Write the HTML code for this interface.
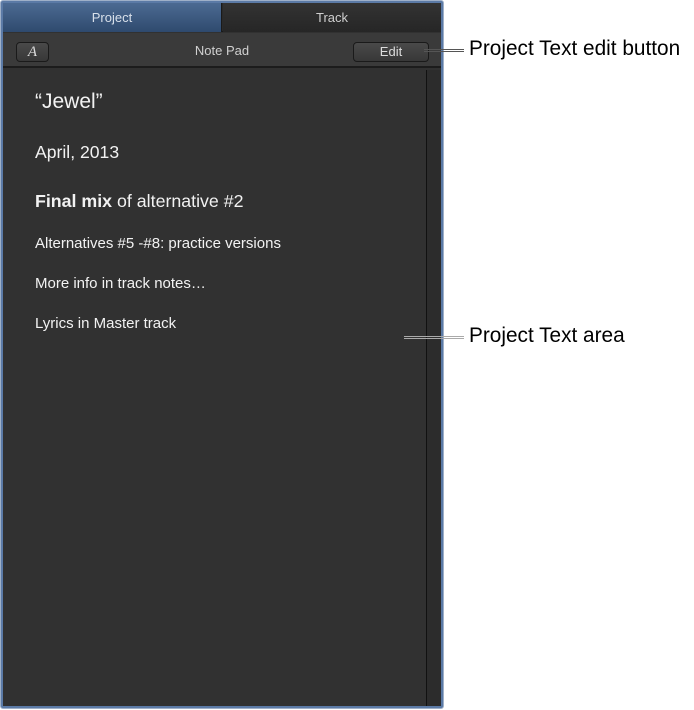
<!DOCTYPE html>
<html><head><style>
*{margin:0;padding:0;box-sizing:border-box}
body{width:694px;height:710px;background:#fff;font-family:"Liberation Sans",Arial,sans-serif;position:relative;overflow:hidden}
.panel{position:absolute;left:0;top:0;width:444px;height:709px;background:#5b7aa6;border:1px solid #9fb0c8;border-radius:3px}
.in{position:absolute;left:2px;top:2px;right:2px;bottom:2px;background:#313131}
.tabs{position:absolute;left:0;top:0;right:0;height:29px;background:#2a2a2a;border-bottom:1px solid #1a1a1a}
.tab{position:absolute;top:0;height:29px;line-height:29px;text-align:center;font-size:13px;color:#cfcfcf}
.t1{left:0;width:219px;background:linear-gradient(#4c6a92,#2f4a6e);color:#d8e0ea;border-right:1px solid #1a1a1a}
.t2{left:220px;right:0;background:linear-gradient(#333,#262626)}
.bar{position:absolute;left:0;right:0;top:30px;height:35px;background:#3a3a3a;border-bottom:2px solid #1c1c1c}
.btn{position:absolute;border:1px solid #1a1a1a;border-radius:4px;background:linear-gradient(#4a4a4a,#383838);color:#ddd;text-align:center;font-size:13px}
.np{position:absolute;left:0;right:0;top:0;line-height:35px;text-align:center;font-size:13px;color:#d0d0d0}
.sb{position:absolute;right:0;top:67px;bottom:0;width:15px;background:#2c2c2c;border-left:1px solid #111}
.t{position:absolute;left:32px;color:#f2f2f2;white-space:nowrap}
.lbl{position:absolute;font-size:20.8px;color:#000;white-space:nowrap}
.ln{position:absolute;height:3px;border-top:1px solid #333;border-bottom:1px solid #333}
</style></head><body>
<div class="panel"><div class="in">
<div class="tabs"><div class="tab t1">Project</div><div class="tab t2">Track</div></div>
<div class="bar">
<div class="btn" style="left:13px;top:9px;width:33px;height:20px;font-family:'Liberation Serif',serif;font-style:italic;font-size:15px;line-height:18px">A</div>
<div class="np">Note Pad</div>
<div class="btn" style="left:350px;top:9px;width:76px;height:20px;line-height:18px">Edit</div>
</div>
<div class="sb"></div>
<div class="t" style="top:87px;font-size:21px">“Jewel”</div>
<div class="t" style="top:139px;font-size:17.6px">April, 2013</div>
<div class="t" style="top:188px;font-size:17.8px"><b>Final mix</b> of alternative #2</div>
<div class="t" style="top:232px;font-size:15px">Alternatives #5 -#8: practice versions</div>
<div class="t" style="top:272px;font-size:15px">More info in track notes…</div>
<div class="t" style="top:312px;font-size:15px">Lyrics in Master track</div>
</div></div>
<div class="ln" style="left:424px;top:49px;width:40px;border-color:#555"></div>
<div class="ln" style="left:404px;top:336px;width:60px;border-color:#aaa"></div>
<div class="lbl" style="left:469px;top:37px">Project Text edit button</div>
<div class="lbl" style="left:469px;top:324px">Project Text area</div>
</body></html>
